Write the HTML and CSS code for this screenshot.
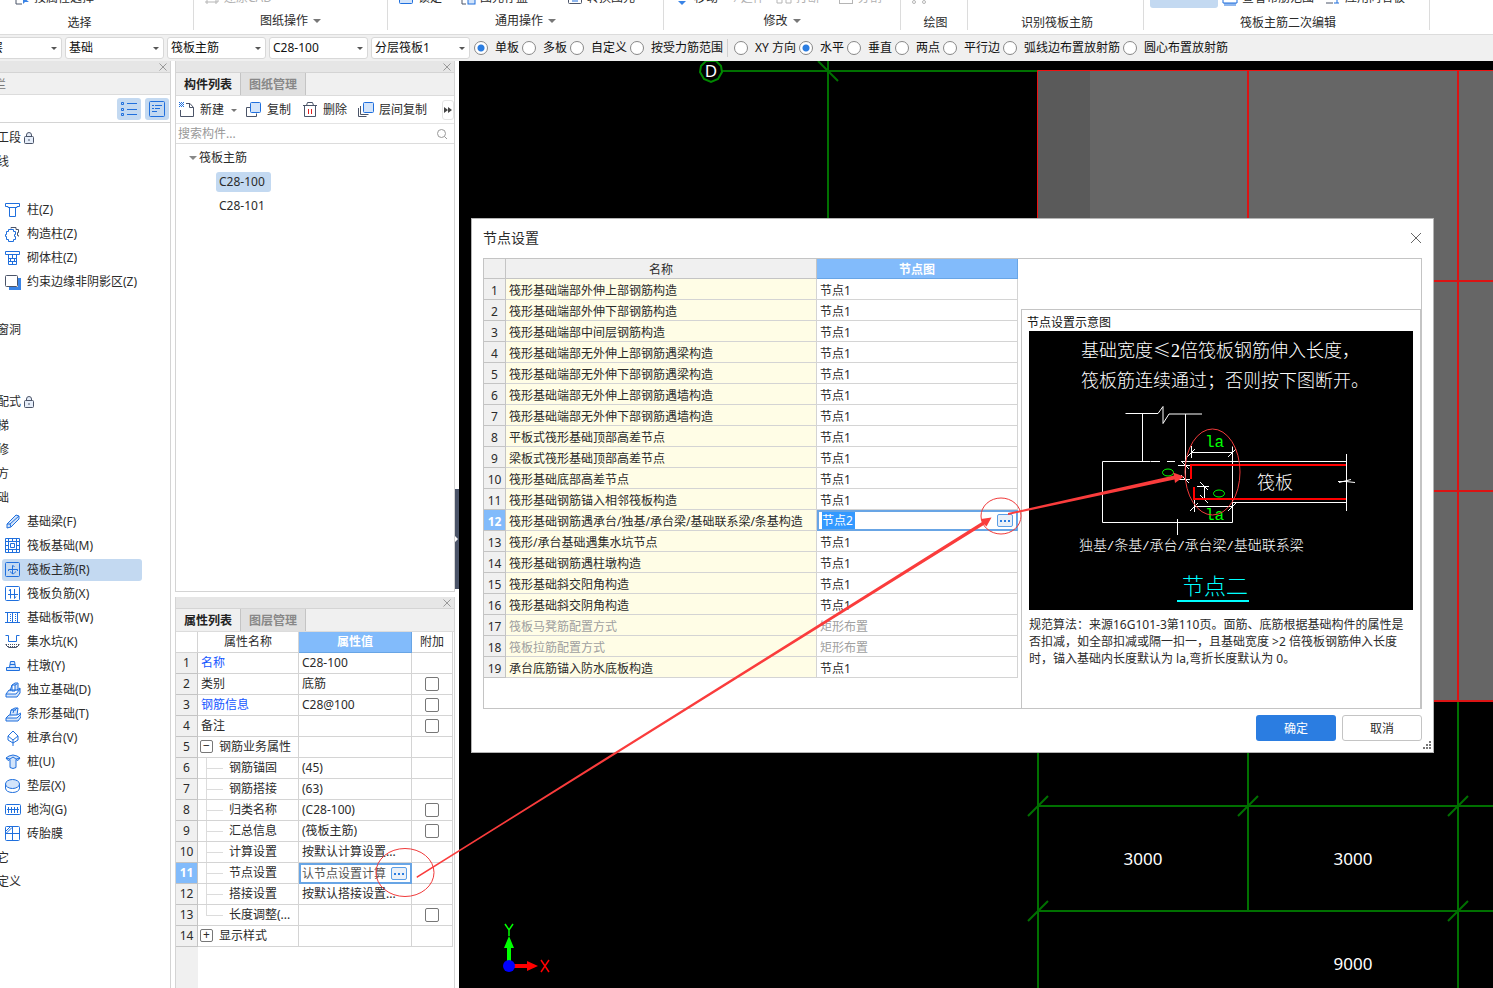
FILE: index.html
```html
<!DOCTYPE html>
<html lang="zh-CN">
<head>
<meta charset="utf-8">
<title>节点设置</title>
<link rel="stylesheet" href="styles.css">
</head>
<body>
<div class="app">
<header class="ribbon">
  <section class="group g-select">
    <div class="tools"><svg class="ic" viewBox="0 0 16 16"><path class="k" d="M5 2H2v12h6"/><path class="bf" d="M9 7v7l2-2h4z"/></svg><span>按属性选择</span></div>
    <h2 class="cap">选择</h2>
  </section>
  <section class="group g-sheet">
    <div class="tools off"><svg class="ic" viewBox="0 0 16 16"><path class="g" d="M2 2h12v10H1M3 9v5M12 9v5"/></svg><span>还原CAD</span></div>
    <h2 class="cap drop">图纸操作</h2>
  </section>
  <section class="group g-common">
    <div class="tools"><svg class="ic" viewBox="0 0 16 16"><rect class="b l" x="1.500" y="3.500" width="13" height="10" rx="1"/></svg><span>锁定</span>
      <svg class="ic far" viewBox="0 0 16 16"><path class="k" d="M5 3H2v11h4"/><rect class="b l" x="8" y="8" width="7" height="6"/></svg><span>图元存盘</span>
      <svg class="ic farther" viewBox="0 0 16 16"><rect class="k" x="1.500" y="3.500" width="13" height="10" rx="1"/><path class="b" d="M5 11h6"/></svg><span>转换图元</span></div>
    <h2 class="cap drop">通用操作</h2>
  </section>
  <section class="group g-edit">
    <div class="tools"><svg class="ic" viewBox="0 0 16 16"><path class="bf" d="M8 15l-4-4h8z"/></svg><span>移动</span>
      <span class="off far">⁄ 延伸</span>
      <svg class="ic near" viewBox="0 0 16 16"><path class="g" d="M6 4v9H1V4M15 4v9h-5V4"/></svg><span class="off">打断</span>
      <svg class="ic far" viewBox="0 0 16 16"><rect class="g" x="1.500" y="3.500" width="13" height="10"/></svg><span class="off">分割</span></div>
    <h2 class="cap drop">修改</h2>
  </section>
  <section class="group g-draw">
    <div class="tools off"><svg class="ic" viewBox="0 0 16 16"><circle class="g" cx="3" cy="12" r="1.500"/><circle class="g" cx="13" cy="12" r="1.500"/></svg></div>
    <h2 class="cap">绘图</h2>
  </section>
  <section class="group g-recog"><h2 class="cap">识别筏板主筋</h2></section>
  <section class="group g-second">
    <div class="tools"><span class="pressed"></span><svg class="ic" viewBox="0 0 16 16"><path class="b" d="M1 9v4h14V9M3 13v3M5 13v3M7 13v3M9 13v3M11 13v3M13 13v3"/></svg><span>查看布筋范围</span>
      <svg class="ic near" viewBox="0 0 16 16"><path class="k" d="M1 13h7"/><path class="b" d="M12 5v8M9 13h5"/></svg><span>应用同名板</span></div>
    <h2 class="cap">筏板主筋二次编辑</h2>
  </section>
</header>

<form class="options">
  <div class="picks">
    <span class="pick"><select aria-label="楼层"><option>基础层</option></select></span>
    <span class="pick"><select aria-label="构件大类"><option>基础</option></select></span>
    <span class="pick"><select aria-label="构件类型"><option>筏板主筋</option></select></span>
    <span class="pick"><select aria-label="构件"><option>C28-100</option></select></span>
    <span class="pick"><select aria-label="分层"><option>分层筏板1</option></select></span>
  </div>
  <div class="radios">
    <label><input type="radio" name="range" checked>单板</label>
    <label><input type="radio" name="range">多板</label>
    <label><input type="radio" name="range">自定义</label>
    <label><input type="radio" name="range">按受力筋范围</label>
  </div>
  <div class="radios second">
    <label><input type="radio" name="dir">XY 方向</label>
    <label><input type="radio" name="dir" checked>水平</label>
    <label><input type="radio" name="dir">垂直</label>
    <label><input type="radio" name="dir">两点</label>
    <label><input type="radio" name="dir">平行边</label>
    <label><input type="radio" name="dir">弧线边布置放射筋</label>
    <label><input type="radio" name="dir">圆心布置放射筋</label>
  </div>
</form>

<div class="work">
<nav class="nav">
  <div class="strip"><button class="x" aria-label="关闭"><svg viewBox="0 0 8 8"><path d="M.5.5l7 7M7.500.5l-7 7"/></svg></button></div>
  <div class="navtitle"><span>导航栏</span></div>
  <div class="navtools">
    <button aria-label="列表"><svg viewBox="0 0 16 16"><path class="b" d="M6 2.500h10M6 8.500h10M6 13.500h10"/><path class="b" d="M.5 1.500h2v2h-2zM.5 7.500h2v2h-2zM.5 12.500h2v2h-2z"/></svg></button>
    <button aria-label="卡片"><svg viewBox="0 0 16 16"><rect class="b" x=".5" y=".5" width="15" height="15" rx="1"/><path class="b" d="M3 4.500h2M6 4.500h7M3 7.500h2M6 7.500h5M3 10.500h5"/></svg></button>
  </div>
  <ul class="cats">
    <li class="cat">施工段<svg class="lock" viewBox="0 0 10 12"><path d="M2.500 4.500V3a2.500 2.500 0 015 0v1.500"/><rect x=".5" y="4.500" width="9" height="7" rx="1"/><path d="M5 7v2"/></svg></li>
    <li class="cat">轴线</li>
    <li class="cat">柱</li>
    <li><svg class="ic" viewBox="0 0 16 16"><path class="b" d="M.5 1.500h14v3H12v1H3v-1H.500zM4.500 5.500v9h6v-9"/></svg>柱(Z)</li>
    <li><svg class="ic" viewBox="0 0 16 16"><path class="k" d="M6 2.500V1.500h5v2h2.500v3h-1v3h1v1"/><path class="b" d="M3.500 3.500h5v2h2v3h-1v2h1v3h-2v2h-5v-2h-2v-3h-1v-2h1v-3h2z"/></svg>构造柱(Z)</li>
    <li><svg class="ic" viewBox="0 0 16 16"><path class="b" d="M.5 1.500h14v3H.500zM3.500 4.500v10h8v-10M3.500 8.500h8M3.500 11.500h8M7.500 4.500v4M5.500 8.500v3M9.500 8.500v3M7.500 11.500v3"/></svg>砌体柱(Z)</li>
    <li><svg class="ic" viewBox="0 0 16 16"><path class="bf" d="M13 4h3v12H4v-3h9z"/><rect class="k w" x=".5" y="1.500" width="12" height="11" rx="1"/></svg>约束边缘非阴影区(Z)</li>
    <li class="cat">墙</li>
    <li class="cat">门窗洞</li>
    <li class="cat">梁</li>
    <li class="cat">板</li>
    <li class="cat">装配式<svg class="lock" viewBox="0 0 10 12"><path d="M2.500 4.500V3a2.500 2.500 0 015 0v1.500"/><rect x=".5" y="4.500" width="9" height="7" rx="1"/><path d="M5 7v2"/></svg></li>
    <li class="cat">楼梯</li>
    <li class="cat">装修</li>
    <li class="cat">土方</li>
    <li class="cat">基础</li>
    <li><svg class="ic" viewBox="0 0 16 16"><path class="b l" d="M2 10l9-9 3 1v3l-8 8-4 1z"/><path class="b" d="M2 10h3l1 3M5 10l9-8"/></svg>基础梁(F)</li>
    <li><svg class="ic" viewBox="0 0 16 16"><path class="b" d="M.5.5h14v14H.500zM3.500.5v14M7.500.5v3M7.500 11.500v3M11.500.5v14M.5 3.500h14M.5 7.500h3M11.500 7.500h3M.5 11.500h14M5.500 5.500h4v4h-4z"/></svg>筏板基础(M)</li>
    <li class="on"><svg class="ic" viewBox="0 0 16 16"><rect class="b" x=".5" y=".5" width="14" height="14" rx="1"/><path class="b" d="M3.500 9V7.500h9V9M7.500 12V3.500l2 1M5.500 9.500c1 3 4 3 5 0"/></svg>筏板主筋(R)</li>
    <li><svg class="ic" viewBox="0 0 16 16"><rect class="b" x=".5" y=".5" width="14" height="14" rx="1"/><path class="b" d="M5.500 3v9.500M9.500 3v9.500M3 8.500h10M4 5l1.500-2M11 10.500l-1.500 2"/></svg>筏板负筋(X)</li>
    <li><svg class="ic" viewBox="0 0 16 16"><path class="b" d="M0 2.500h15M0 12.500h15M2.500 2.500v10M12.500 2.500v10M7.500 2.500v10"/><path class="b dash" d="M5.500 4v8M10.500 4v8"/></svg>基础板带(W)</li>
    <li><svg class="ic" viewBox="0 0 16 16"><path class="b" d="M.5 1.500h3v6h8v-6h3"/><path class="k dash" d="M1 10.500h14M3 12.500h10"/><path class="k" d="M.5 10.500l3 3h8l3-3"/></svg>集水坑(K)</li>
    <li><svg class="ic" viewBox="0 0 16 16"><path class="b l" d="M1.500 9.500h13v3h-13zM4.500 9.500l1-6h4l1 6M5 6.500h5"/></svg>柱墩(Y)</li>
    <li><svg class="ic" viewBox="0 0 16 16"><path class="b l" d="M1 12l3-4h8l3-2v5l-3 4H1zM1 12h10l4-5M5 9l2-6 3-2h3v8M7 3v6h3V3zM10 3l2-1"/></svg>独立基础(D)</li>
    <li><svg class="ic" viewBox="0 0 16 16"><path class="b l" d="M1 12l3-3h8l4-2v4l-3 4H1zM1 12h11l4-4M5 9l1-5 4-2h3l-1 7M6 4h5M10 4l2-2M8 7l1-3"/></svg>条形基础(T)</li>
    <li><svg class="ic" viewBox="0 0 16 16"><path class="b" d="M8 1l5 5v4l-5 3-5-3V6zM3 6l5 4 5-4M8 10v6"/></svg>桩承台(V)</li>
    <li><svg class="ic" viewBox="0 0 16 16"><path class="b l" d="M1 4l3-2 4-1 4 1 3 2-2 2.500-2-1v8l-3 1-3-1v-8l-2 1zM1 4l4 1 3-2 3 2 4-1"/></svg>桩(U)</li>
    <li><svg class="ic" viewBox="0 0 16 16"><path class="b" d="M.5 6v4c0 6 14 6 14 0V6"/><ellipse class="b l" cx="7.500" cy="6" rx="7" ry="4.500"/></svg>垫层(X)</li>
    <li><svg class="ic" viewBox="0 0 16 16"><rect class="b" x=".5" y="2.500" width="15" height="10" rx="1"/><path class="b" d="M2 7.500h12M3.500 5v6M6.500 5v6M9.500 5v6M12.500 5v6"/></svg>地沟(G)</li>
    <li><svg class="ic" viewBox="0 0 16 16"><rect class="b" x=".5" y=".5" width="14" height="14" rx="1"/><path class="b" d="M7.500.5v14M.5 7.500h14M.5 5.500l5-5M1 7.500l6-6"/></svg>砖胎膜</li>
    <li class="cat">其它</li>
    <li class="cat">自定义</li>
  </ul>
</nav>

<div class="mid">
  <section class="panel list">
    <div class="strip"><button class="x" aria-label="关闭"><svg viewBox="0 0 8 8"><path d="M.5.5l7 7M7.500.5l-7 7"/></svg></button></div>
    <div class="tabs"><button class="tab cur">构件列表</button><button class="tab">图纸管理</button></div>
    <div class="acts">
      <button class="new"><svg class="ic" viewBox="0 0 16 16"><path class="k" d="M7 1.500h4l3.500 4v9H1.500V8M10.500 1.500v4h4"/><path class="b dash" d="M0 .5h5M1 1.500h4M0 2.500h5M1 3.500h4M0 4.500h5"/></svg>新建</button>
      <button class="copy"><svg class="ic" viewBox="0 0 16 16"><path class="k" d="M5 5.500H.500v9h10v-3"/><rect class="b l" x="4.500" y=".5" width="10" height="10" rx="1"/></svg>复制</button>
      <button class="del"><svg class="ic" viewBox="0 0 16 16"><path class="k" d="M1 3.500h14M4.500 3.500l1-3h5l1 3M2.500 4v10.500h11V4"/><path class="r" d="M6.500 7v5M9.500 7v5"/></svg>删除</button>
      <button class="floor"><svg class="ic" viewBox="0 0 16 16"><path class="k" d="M2.500 4v8.500h8M.5 6v8.500h8"/><rect class="b l" x="5.500" y=".5" width="10" height="10" rx="1"/></svg>层间复制</button>
      <button class="more" aria-label="更多"><svg viewBox="0 0 8 6"><path d="M0 0l4 3-4 3zM4 0l4 3-4 3z"/></svg></button>
    </div>
    <div class="search"><input type="text" placeholder="搜索构件..." aria-label="搜索构件"><svg viewBox="0 0 12 12"><circle cx="5.500" cy="5.500" r="4"/><path d="M8.500 8.500l2.500 2.500"/></svg></div>
    <ul class="tree">
      <li class="root">筏板主筋</li>
      <li><span class="node sel">C28-100</span></li>
      <li><span class="node">C28-101</span></li>
    </ul>
  </section>

  <section class="panel props">
    <div class="strip"><button class="x" aria-label="关闭"><svg viewBox="0 0 8 8"><path d="M.5.5l7 7M7.500.5l-7 7"/></svg></button></div>
    <div class="tabs"><button class="tab cur">属性列表</button><button class="tab">图层管理</button></div>
    <div class="sheet">
    <table class="grid ptable">
      <colgroup><col class="c-no"><col class="c-name"><col class="c-val"><col class="c-add"></colgroup>
      <thead><tr><th></th><th>属性名称</th><th class="hot">属性值</th><th>附加</th></tr></thead>
      <tbody>
      <tr><th>1</th><td class="link">名称</td><td>C28-100</td><td></td></tr>
      <tr><th>2</th><td>类别</td><td>底筋</td><td class="ck"><input type="checkbox" aria-label="附加 类别"></td></tr>
      <tr><th>3</th><td class="link">钢筋信息</td><td>C28@100</td><td class="ck"><input type="checkbox" aria-label="附加 钢筋信息"></td></tr>
      <tr><th>4</th><td>备注</td><td></td><td class="ck"><input type="checkbox" aria-label="附加 备注"></td></tr>
      <tr><th>5</th><td class="fold"><button aria-label="折叠">−</button>钢筋业务属性</td><td></td><td></td></tr>
      <tr><th>6</th><td class="sub">钢筋锚固</td><td>(45)</td><td></td></tr>
      <tr><th>7</th><td class="sub">钢筋搭接</td><td>(63)</td><td></td></tr>
      <tr><th>8</th><td class="sub">归类名称</td><td>(C28-100)</td><td class="ck"><input type="checkbox" aria-label="附加 归类名称"></td></tr>
      <tr><th>9</th><td class="sub">汇总信息</td><td>(筏板主筋)</td><td class="ck"><input type="checkbox" aria-label="附加 汇总信息"></td></tr>
      <tr><th>10</th><td class="sub">计算设置</td><td>按默认计算设置...</td><td></td></tr>
      <tr class="act"><th>11</th><td class="sub">节点设置</td><td class="edit"><div class="field"><input type="text" value="认节点设置计算" aria-label="节点设置"><button class="dots" aria-label="浏览"><i></i><i></i><i></i></button></div></td><td></td></tr>
      <tr><th>12</th><td class="sub">搭接设置</td><td>按默认搭接设置...</td><td></td></tr>
      <tr><th>13</th><td class="sub last">长度调整(...</td><td></td><td class="ck"><input type="checkbox" aria-label="附加 长度调整"></td></tr>
      <tr><th>14</th><td class="fold"><button aria-label="展开">+</button>显示样式</td><td></td><td></td></tr>
      </tbody>
    </table>
    </div>
  </section>
</div>

<div class="splitter"><button aria-label="收起"></button></div>

<main class="canvas">
  <svg class="cad" width="1034" height="927" viewBox="459 61 1034 927">
    <rect x="1038" y="71" width="455" height="630" fill="#666"/>
    <rect x="1038" y="71" width="52" height="630" fill="#5a5a5a"/>
    <g class="axis">
      <path d="M722 71h316M828 61v160M818 61l20 20"/>
      <path d="M706 61h10l5 5 1 6-4 7-7 3-7-3-4-7 1-6z" class="thin"/>
      <path d="M1038 701v287M1248 701v210M1458 701v287M1038 806h455M1038 911h455M1028 816l20-20M1238 816l20-20M1448 816l20-20M1028 921l20-20M1448 921l20-20"/>
    </g>
    <path class="rim" d="M1037.500 701V70.500H1493"/>
    <path class="slab" d="M1248 71v630M1458 71v630M1038 281h455M1038 491h455M1038 701h455"/>
    <g class="cadtext"><text x="711" y="77">D</text><text x="1143" y="865">3000</text><text x="1353" y="865">3000</text><text x="1353" y="970">9000</text></g>
    <path d="M509 966v-22" stroke="#0f0" stroke-width="4"/><path d="M504 948l5-12 5 12z" fill="#0f0"/>
    <path d="M509 966h20" stroke="#f00" stroke-width="4"/><path d="M527 961l11 5-11 5z" fill="#f00"/>
    <circle cx="509" cy="966" r="6" fill="#00f"/>
    <path d="M505 924l4 6 4-6M509 930v6" stroke="#0f0" stroke-width="1.500" fill="none"/><path d="M541 960l8 12M549 960l-8 12" stroke="#f00" stroke-width="1.500" fill="none"/>
  </svg>

  <section class="dialog" role="dialog" aria-labelledby="dlg">
    <header><h1 id="dlg">节点设置</h1><button class="close" aria-label="关闭"><svg viewBox="0 0 12 12"><path d="M1 1l10 10M11 1L1 11"/></svg></button></header>
    <div class="body">
      <table class="grid ntable">
        <colgroup><col class="c-no"><col class="c-title"><col class="c-node"></colgroup>
        <thead><tr><th></th><th>名称</th><th class="hot">节点图</th></tr></thead>
        <tbody>
        <tr><th>1</th><td>筏形基础端部外伸上部钢筋构造</td><td>节点1</td></tr>
        <tr><th>2</th><td>筏形基础端部外伸下部钢筋构造</td><td>节点1</td></tr>
        <tr><th>3</th><td>筏形基础端部中间层钢筋构造</td><td>节点1</td></tr>
        <tr><th>4</th><td>筏形基础端部无外伸上部钢筋遇梁构造</td><td>节点1</td></tr>
        <tr><th>5</th><td>筏形基础端部无外伸下部钢筋遇梁构造</td><td>节点1</td></tr>
        <tr><th>6</th><td>筏形基础端部无外伸上部钢筋遇墙构造</td><td>节点1</td></tr>
        <tr><th>7</th><td>筏形基础端部无外伸下部钢筋遇墙构造</td><td>节点1</td></tr>
        <tr><th>8</th><td>平板式筏形基础顶部高差节点</td><td>节点1</td></tr>
        <tr><th>9</th><td>梁板式筏形基础顶部高差节点</td><td>节点1</td></tr>
        <tr><th>10</th><td>筏形基础底部高差节点</td><td>节点1</td></tr>
        <tr><th>11</th><td>筏形基础钢筋锚入相邻筏板构造</td><td>节点1</td></tr>
        <tr class="act"><th>12</th><td>筏形基础钢筋遇承台/独基/承台梁/基础联系梁/条基构造</td><td class="edit"><div class="field"><input class="marked" type="text" value="节点2" aria-label="节点图"><button class="dots" aria-label="浏览"><i></i><i></i><i></i></button></div></td></tr>
        <tr><th>13</th><td>筏形/承台基础遇集水坑节点</td><td>节点1</td></tr>
        <tr><th>14</th><td>筏形基础钢筋遇柱墩构造</td><td>节点1</td></tr>
        <tr><th>15</th><td>筏形基础斜交阳角构造</td><td>节点1</td></tr>
        <tr><th>16</th><td>筏形基础斜交阴角构造</td><td>节点1</td></tr>
        <tr class="dim"><th>17</th><td>筏板马凳筋配置方式</td><td>矩形布置</td></tr>
        <tr class="dim"><th>18</th><td>筏板拉筋配置方式</td><td>矩形布置</td></tr>
        <tr><th>19</th><td>承台底筋锚入防水底板构造</td><td>节点1</td></tr>
        </tbody>
      </table>
      <div class="preview">
        <h3>节点设置示意图</h3>
        <svg class="figure" width="384" height="279" viewBox="0 0 384 279">
          <rect width="384" height="279" fill="#000"/>
          <g class="note"><text x="52" y="26">基础宽度≤<tspan class="serif">2</tspan>倍筏板钢筋伸入长度，</text><text x="52" y="56">筏板筋连续通过；否则按下图断开。</text><text x="228" y="158">筏板</text></g>
          <g class="line">
            <path d="M96.500 82.500H129l5-7v17l6-9.500h33M113.500 83v47M156.500 83v47M121.500 130.500h-48v61h130v-76M122 130.500h8M129 130.500h2M138 130.500h8M152 130.500h165M204 171.500h113M317.500 123v57M309 150.500h8l9 1M310 151.500l12-3"/>
            <path d="M162.500 115v12M162 121.500h42M158 126l8-8M199 126l8-8M165.500 169v12M165 175.500h39M161 180l8-8M199 180l8-8M148.500 188v16"/>
            <path d="M156.500 131v17M149 134.500h12M149 148.500h12M152 130l8 8M152 144l8 8M175.500 156v13M168 155.500h12M168 168.500h12M171 151l8 8M171 164l8 8"/>
          </g>
          <path class="bar" d="M162 148v-14h155M165 156v12h152"/>
          <g class="green"><text x="176" y="116">la</text><text x="176" y="189">la</text><ellipse cx="139" cy="141.500" rx="5.500" ry="3.500"/><ellipse cx="190" cy="162.500" rx="5.500" ry="3.500"/></g>
          <text class="small" x="50" y="219">独基<tspan class="bar-sep">/</tspan>条基<tspan class="bar-sep">/</tspan>承台<tspan class="bar-sep">/</tspan>承台梁<tspan class="bar-sep">/</tspan>基础联系梁</text>
          <text class="cyan" x="153" y="263">节点二</text><path d="M148 270h72" stroke="#0ff" stroke-width="2"/>
        </svg>
        <p>规范算法：来源16G101-3第110页。面筋、底筋根据基础构件的属性是否扣减，如全部扣减或隔一扣一，且基础宽度 &gt;2 倍筏板钢筋伸入长度时，锚入基础内长度默认为 la,弯折长度默认为 0。</p>
      </div>
    </div>
    <footer><button class="primary">确定</button><button class="plain">取消</button></footer>
    <svg class="grip" viewBox="0 0 9 9"><path d="M7 0h2v2H7zM4 3h2v2H4zM7 3h2v2H7zM1 6h2v2H1zM4 6h2v2H4zM7 6h2v2H7z"/></svg>
  </section>
</main>
</div>

<svg class="marks" width="1493" height="988" viewBox="0 0 1493 988" aria-hidden="true">
  <g fill="none" stroke="#f03a3a"><ellipse cx="405" cy="872.500" rx="29" ry="24"/><ellipse cx="1001" cy="516" rx="20" ry="18"/><ellipse cx="1212.500" cy="472" rx="27.500" ry="43"/></g>
  <path fill="#fa3c3c" d="M416.500 876.500L982 522l-1-3 10.500-1.500-5 9-2-2L417 878zM1008 513L1174 475.500l-1-3 11 4-9 6.500-.5-3.500L1008 515z"/>
</svg>
</div>
</body>
</html>
```

FILE: styles.css
```css
* { box-sizing: border-box; }
body {
  margin: 0;
  font: 12px/18px "Noto Sans", "Noto Sans CJK SC", sans-serif;
  color: #2b2b2b;
  background: #fff;
}
button, input, select { font: inherit; color: inherit; margin: 0; padding: 0; border: 0; background: none; }
h1, h2, h3, p, ul { margin: 0; padding: 0; font-weight: 400; list-style: none; }
.app { position: relative; height: 100vh; display: flex; flex-direction: column; overflow: hidden; }

.ic { width: 16px; height: 16px; flex: none; }
.b, .k, .g, .r { fill: none; stroke: #1f6fdd; }
.k { stroke: #4b5468; }
.g { stroke: #b5b5b5; }
.r { stroke: #e02020; }
.l { fill: #d3e4fa; }
.w { fill: #fff; }
.bf { fill: #3a84e6; }
.dash { stroke-dasharray: 1 1; }

/* ribbon */
.ribbon { height: 34px; flex: none; display: flex; overflow: hidden; }
.group { position: relative; height: 30px; flex: none; display: flex; flex-direction: column; justify-content: flex-end; border-right: 1px solid #dcdcdc; }
.tools { display: flex; align-items: center; gap: 4px; height: 18px; flex: none; white-space: nowrap; margin-bottom: 7px; padding-left: 10px; }
.tools:has(+ .drop) { margin-bottom: 5px; }
.off { color: #b0b0b0; }
.cap { height: 16px; font-size: 12px; line-height: 17px; text-align: center; flex: none; }
.drop { height: 18px; }
.drop::after { content: ""; display: inline-block; margin-left: 5px; border: 4px solid transparent; border-top-color: #777; border-bottom: 0; vertical-align: 2px; }
.g-select { width: 228px; margin-left: -34px; }
.g-select .tools { padding-left: 48px; }
.g-sheet { width: 194px; }
.g-common { width: 276px; }
.g-edit { width: 237px; }
.g-draw { width: 67px; }
.g-recog { width: 176px; }
.g-second { width: 286px; }
.g-draw .cap, .g-recog .cap, .g-second .cap { padding-left: 3px; }
.near { margin-left: 7px; }
.far { margin-left: 14px; }
.farther { margin-left: 35px; }
.pressed { width: 68px; height: 20px; border-radius: 3px; background: #c3d9f1; }
.g-second .tools { padding-left: 6px; }

/* option bar */
.options { height: 27px; flex: none; display: flex; align-items: center; background: #f0f0f0; border-top: 1px solid #dcdcdc; white-space: nowrap; overflow: hidden; color: #111; }
.picks { display: flex; gap: 3px; margin-left: -37px; }
.pick { position: relative; width: 99px; height: 22px; }
.pick select { width: 100%; height: 22px; padding: 0 3px; appearance: none; border: 1px solid #d8d8d8; border-radius: 3px; background: #fff; }
.pick::after { content: ""; position: absolute; right: 5px; top: 10px; border: 3px solid transparent; border-top-color: #555; border-bottom: 0; }
.radios { display: flex; gap: 3px; padding: 0 4px; }
.radios.second { border-left: 1px solid #d0d0d0; padding-left: 6px; }
.radios label { display: flex; align-items: center; gap: 7px; }
.radios input { appearance: none; width: 14px; height: 14px; border: 1px solid #888; border-radius: 50%; background: #fff; }
.radios input:checked { background: radial-gradient(circle, #2b7de1 3px, #fff 4px); }

.work { flex: 1; min-height: 0; display: flex; }
.strip { height: 12px; flex: none; display: flex; justify-content: flex-end; align-items: center; padding-right: 3px; background: #e6e6e6; border-bottom: 1px solid #d4d4d4; }
.x { display: flex; }
.x svg { width: 8px; height: 8px; fill: none; stroke: #999; }

/* navigation */
.nav { width: 171px; flex: none; border-right: 1px solid #d4d4d4; overflow: hidden; }
.navtitle { height: 22px; line-height: 23px; background: #f0f0f0; border-bottom: 1px solid #dcdcdc; color: #777; }
.navtitle span { margin-left: -30px; }
.navtools { height: 28px; display: flex; justify-content: flex-end; align-items: center; gap: 4px; padding-right: 1px; border-bottom: 1px solid #d4d4d4; }
.navtools button { width: 24px; height: 22px; border-radius: 3px; background: #c3d9f1; display: flex; align-items: center; justify-content: center; }
.navtools svg { width: 16px; height: 16px; }
.cats { padding-top: 4px; }
.cats li { height: 22px; margin: 0 28px 2px 2px; padding-left: 3px; display: flex; align-items: center; gap: 6px; white-space: nowrap; border-radius: 3px; }
.cats .cat { margin-left: -15px; padding: 0; gap: 3px; }
.cats .on { background: #c3d9f1; }
.lock { width: 10px; height: 12px; fill: #e6eefa; stroke: #4b5468; }

/* middle column */
.mid { width: 280px; margin-left: 4px; flex: none; display: flex; flex-direction: column; gap: 5px; }
.panel { border: 1px solid #d4d4d4; border-top: 0; display: flex; flex-direction: column; }
.list { height: 531px; flex: none; }
.props { flex: 1; min-height: 0; border-bottom: 0; overflow: hidden; }
.tabs { height: 23px; flex: none; display: flex; background: #f0f0f0; border-bottom: 1px solid #dcdcdc; }
.tab { width: 65px; padding-top: 1px; border-right: 1px solid #c4c4c4; font-weight: 700; color: #888; background: #e0e0e0; }
.cur { color: #222; background: #f0f0f0; }
.acts { height: 28px; flex: none; display: flex; align-items: center; padding: 1px 0 0 3px; border-bottom: 1px solid #e4e4e4; }
.acts button { display: flex; align-items: center; gap: 5px; }
.new::after { content: ""; margin-left: 2px; border: 3px solid transparent; border-top-color: #777; border-bottom: 0; }
.copy { margin-left: 9px; }
.del { margin-left: 11px; }
.floor { margin-left: 11px; }
.acts .more { width: 12px; height: 20px; margin-left: auto; justify-content: center; border: 1px solid #e4e4e4; border-radius: 3px; }
.more svg { width: 8px; height: 6px; flex: none; fill: #444; }
.search { height: 20px; flex: none; display: flex; align-items: center; padding: 0 6px 0 2px; border-bottom: 1px solid #dcdcdc; }
.search input { flex: 1; min-width: 0; }
.search input::placeholder { color: #999; }
.search svg { width: 12px; height: 12px; fill: none; stroke: #999; }
.tree { padding-top: 2px; }
.tree li { height: 24px; display: flex; align-items: center; padding-left: 40px; }
.tree .root { padding-left: 13px; gap: 2px; }
.root::before { content: ""; border: 4px solid transparent; border-top-color: #888; border-bottom: 0; }
.node { padding: 1px 6px 1px 3px; border-radius: 3px; }
.sel { background: #c3d9f1; }

/* grids */
.grid { table-layout: fixed; border-collapse: separate; border-spacing: 0; flex: none; }
.grid td, .grid th { height: 21px; padding: 0 3px; font-weight: 400; line-height: 18px; white-space: nowrap; overflow: hidden; border: solid #d4d4d4; border-width: 0 1px 1px 0; }
.grid tbody th { padding-left: 0; padding-right: 0; background: #f0f0f0; border-color: #c4c4c4; text-align: center; }
.grid .hot, .grid .act th { background: #82bbfb; color: #fff; font-weight: 700; }
.grid .hot { border-color: #68a5e5; }
.c-no { width: 22px; }
.grid .edit { padding: 0; border: 2px solid #68a5e5; }
.field { display: flex; align-items: center; justify-content: space-between; height: 17px; padding: 0 3px 0 1px; }
.field input { width: 86px; height: 17px; line-height: 17px; color: #555; }
.field .marked { width: 33px; color: #fff; background: #3399ff; margin-left: 2px; }
.dots { width: 16px; height: 13px; display: flex; align-items: center; justify-content: center; gap: 2px; border: 1px solid #5b9ee6; border-radius: 2px; background: #eaf0f8; }
.dots i { width: 2px; height: 2px; background: #2b7de1; }

.sheet { flex: 1; background: linear-gradient(90deg, #f0f0f0 22px, #fff 22px); }
.ptable { width: 277px; }
.c-name { width: 101px; }
.c-val { width: 113px; }
.ptable thead th, .ptable td { background: #fff; }
.ptable thead .hot { background: #82bbfb; }
.grid .link { color: #1557ff; }
.grid .ck { padding: 0; text-align: center; }
.ck input { display: block; margin: 0 auto; appearance: none; width: 14px; height: 14px; border: 1px solid #777; border-radius: 2px; background: #fff; }
.grid .fold { padding-left: 2px; }
.fold button { width: 13px; height: 13px; margin-right: 6px; border: 1px solid #777; border-radius: 2px; line-height: 10px; vertical-align: 1px; }
.grid .sub { position: relative; padding-left: 31px; }
.sub::before { content: ""; position: absolute; left: 8px; top: 0; width: 1px; height: 21px; background: #dcdcdc; }
.sub::after { content: ""; position: absolute; left: 8px; top: 10px; width: 17px; height: 1px; background: #dcdcdc; }
.last::before { height: 10px; }

.splitter { width: 4px; flex: none; }
.splitter button { display: block; width: 4px; height: 100px; margin-top: 428px; background: #4b5468; clip-path: polygon(0 0, 100% 0, 100% 100%, 0 100%, 0 53%, 75% 50%, 0 47%); }

/* drawing area */
.canvas { position: relative; flex: 1; min-width: 0; background: #000; overflow: hidden; }
.cad { display: block; }
.axis { fill: none; stroke: #007000; stroke-width: 2; }
.axis .thin { stroke: #008800; }
.slab { fill: none; stroke: #dc1414; stroke-width: 2; }
.rim { fill: none; stroke: #f01010; }
.cadtext { fill: #fff; font-size: 17px; text-anchor: middle; }

/* dialog */
.dialog { position: absolute; left: 12px; right: 59px; top: 157px; background: #fff; border: 1px solid #b4b4b4; padding: 0 11px 11px; }
.dialog header { height: 39px; padding-bottom: 2px; display: flex; align-items: center; justify-content: space-between; }
.dialog h1 { font-size: 14px; line-height: 20px; }
.close { width: 12px; height: 12px; display: flex; }
.close svg { width: 12px; height: 12px; fill: none; stroke: #666; }
.body { display: flex; align-items: flex-start; border: 1px solid #c4c4c4; }
.ntable { width: 534px; }
.ntable th, .ntable td { padding-top: 2px; line-height: 17px; }
.ntable thead th { height: 20px; background: #f0f0f0; border-color: #c4c4c4; }
.c-title { width: 311px; }
.ntable td:nth-child(2) { background: #fffde6; }
.ntable .dim td { color: #a0a0a0; }
.preview { flex: 1; min-width: 0; height: 399px; margin: 50px 0 0 3px; padding: 4px 7px; border: solid #c4c4c4; border-width: 1px 1px 0 1px; }
.preview h3 { font-size: 12px; line-height: 17px; margin-left: -2px; color: #111; }
.figure { display: block; max-width: 100%; }
.preview p { line-height: 17px; margin: 6px -2px 0 0; }
.note, .small, .cyan { font-family: "Noto Sans CJK SC", sans-serif; font-weight: 300; fill: #fff; }
.note { font-size: 18px; }
.serif { font-family: "Liberation Serif", serif; }
.small { font-size: 14px; }
.bar-sep { font-family: "Liberation Mono", monospace; font-size: 12px; }
.cyan { font-size: 22px; fill: #0ff; }
.line { fill: none; stroke: #fff; }
.bar { fill: none; stroke: #f00; stroke-width: 2; }
.green { font: 16px "Liberation Mono", monospace; fill: #0f0; }
.green ellipse { fill: none; stroke: #0f0; }
.dialog footer { display: flex; justify-content: flex-end; gap: 6px; padding-top: 6px; }
.dialog footer button { width: 80px; height: 26px; padding-top: 1px; border-radius: 3px; }
.primary { background: #2b7de1; color: #fff; }
.dialog footer .plain { border: 1px solid #c4c4c4; }
.grip { position: absolute; right: 2px; bottom: 2px; width: 9px; height: 9px; fill: #777; }

.marks { position: absolute; left: 0; top: 0; pointer-events: none; }
```
